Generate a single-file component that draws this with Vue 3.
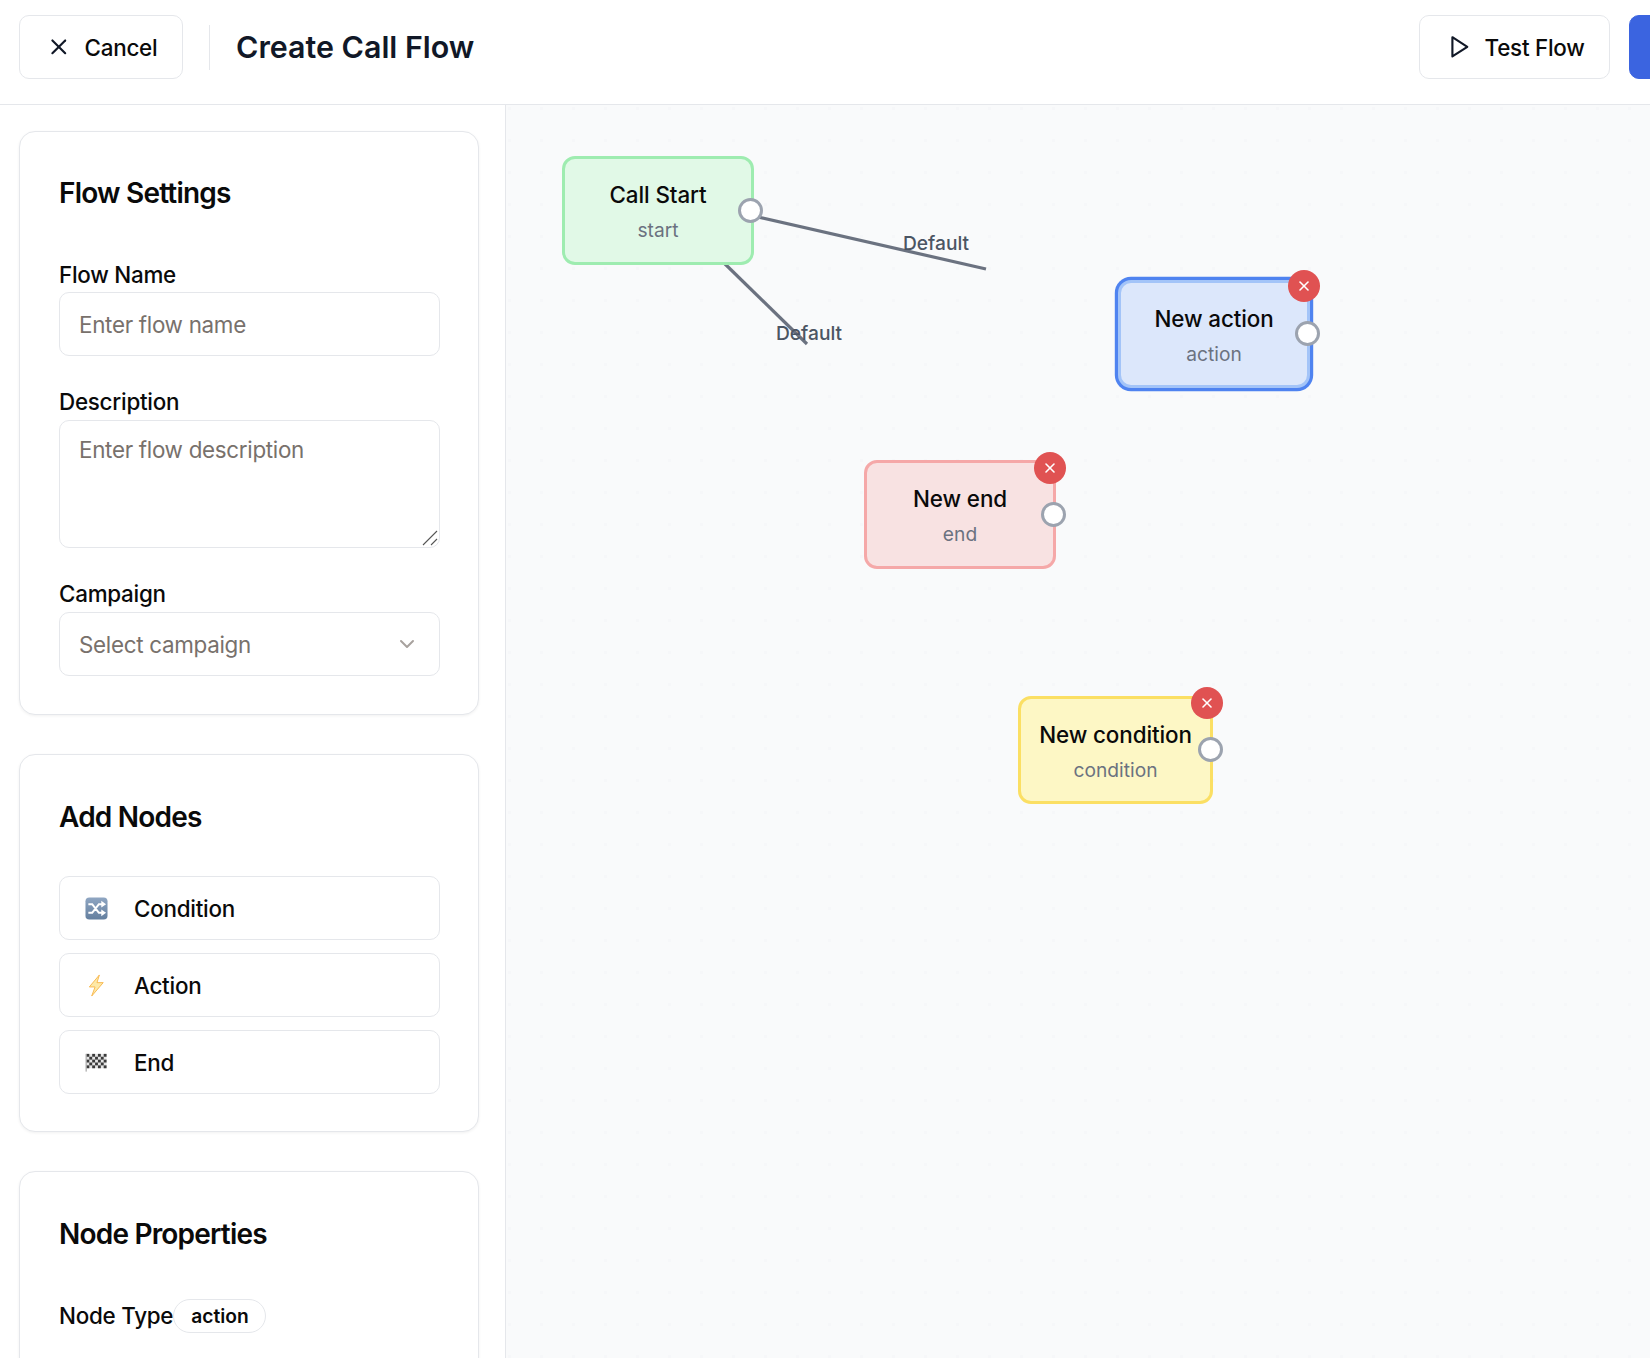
<script setup>
const nodes = [
  { id: 'start', name: 'Call Start', type: 'start', x: 562, y: 156, w: 192, h: 109, removable: false },
  { id: 'action', name: 'New action', type: 'action', x: 1118, y: 280, w: 192, h: 108, removable: true },
  { id: 'end', name: 'New end', type: 'end', x: 864, y: 460, w: 192, h: 109, removable: true },
  { id: 'condition', name: 'New condition', type: 'condition', x: 1018, y: 696, w: 195, h: 108, removable: true },
]
const edges = [
  { x1: 723, y1: 262, x2: 807, y2: 344, lx: 809, ly: 333 },
  { x1: 745, y1: 214, x2: 986, y2: 269, lx: 936, ly: 243 },
]
const canvasLeft = 506
const canvasTop = 105
const checks = []
for (let r = 0; r < 5; r++) for (let c = 0; c < 7; c++) if ((r + c) % 2 === 0) checks.push({ x: 1.5 + c * 3, y: 3 + r * 3 })
</script>

<template>
  <div class="page">
    <header class="topbar">
      <div class="left">
        <button class="btn cancel">
          <svg class="icon" viewBox="0 0 24 24" fill="none" stroke="#111827" stroke-width="2" stroke-linecap="round" stroke-linejoin="round"><path d="M18 6 6 18" /><path d="m6 6 12 12" /></svg>
          Cancel
        </button>
        <span class="divider"></span>
        <h1 class="title">Create Call Flow</h1>
      </div>
      <div class="right">
        <button class="btn test">
          <svg class="icon" viewBox="0 0 24 24" fill="none" stroke="#111827" stroke-width="2" stroke-linecap="round" stroke-linejoin="round"><polygon points="6 3 20 12 6 21 6 3" /></svg>
          Test Flow
        </button>
        <button class="btn primary" aria-label="Save Flow"></button>
      </div>
    </header>

    <div class="body">
      <aside class="sidebar">
        <section class="card settings">
          <h2>Flow Settings</h2>
          <label class="lbl first">Flow Name</label>
          <input class="field" placeholder="Enter flow name" />
          <label class="lbl">Description</label>
          <div class="area-wrap">
            <textarea class="field area" placeholder="Enter flow description"></textarea>
            <svg class="grip" viewBox="0 0 16 16" fill="none" stroke="#555" stroke-width="1.1"><path d="M1 15 15 1" /><path d="M9 15l6-6" /></svg>
          </div>
          <label class="lbl">Campaign</label>
          <div class="field select">
            <span>Select campaign</span>
            <svg class="chev" viewBox="0 0 24 24" fill="none" stroke="#a8a29e" stroke-width="2" stroke-linecap="round" stroke-linejoin="round"><path d="m6 9 6 6 6-6" /></svg>
          </div>
        </section>

        <section class="card add">
          <h2>Add Nodes</h2>
          <div class="add-list">
            <button class="add-btn">
              <svg class="emoji" viewBox="0 0 24 24">
                <defs><linearGradient id="sh" x1="0" y1="0" x2="0" y2="1"><stop offset="0" stop-color="#8fa6c2" /><stop offset="1" stop-color="#647f9f" /></linearGradient></defs>
                <rect x="0.5" y="0.5" width="23" height="23" rx="4" fill="url(#sh)" />
                <path d="M3.5 7.5h4l7 9h4M3.5 16.5h4l7-9h4" fill="none" stroke="#fff" stroke-width="2.2" />
                <path d="M17 4l5 3.5-5 3.5zM17 13l5 3.5-5 3.5z" fill="#fff" />
              </svg>
              Condition
            </button>
            <button class="add-btn">
              <svg class="emoji" viewBox="0 0 24 24">
                <path d="M15 1 4.5 13.5h6L7 23 19 9h-6.5z" fill="#fde9a8" stroke="#f8b84e" stroke-width="1" stroke-linejoin="round" />
              </svg>
              Action
            </button>
            <button class="add-btn">
              <svg class="emoji" viewBox="0 0 24 24">
                <rect x="1.5" y="3" width="21" height="15" fill="#e5e5e5" />
                <rect v-for="(s, i) in checks" :key="i" :x="s.x" :y="s.y" width="3" height="3" fill="#3a3a3a" />
                <rect x="0.6" y="3" width="1.2" height="18.5" fill="#a3a3a3" />
              </svg>
              End
            </button>
          </div>
        </section>

        <section class="card props">
          <h2>Node Properties</h2>
          <div class="type-row">
            <span class="type-lbl">Node Type</span>
            <span class="badge">action</span>
          </div>
        </section>
      </aside>

      <main class="canvas">
        <svg class="edges" width="1144" height="1253">
          <line v-for="(e, i) in edges" :key="i" :x1="e.x1 - canvasLeft" :y1="e.y1 - canvasTop" :x2="e.x2 - canvasLeft" :y2="e.y2 - canvasTop" stroke="#6b7280" stroke-width="3.2" />
        </svg>
        <span v-for="(e, i) in edges" :key="'l' + i" class="edge-label" :style="{ left: e.lx - canvasLeft + 'px', top: e.ly - canvasTop + 'px' }">Default</span>

        <div
          v-for="n in nodes"
          :key="n.id"
          class="node"
          :class="n.type"
          :style="{ left: n.x - canvasLeft + 'px', top: n.y - canvasTop + 'px', width: n.w + 'px', height: n.h + 'px' }"
        >
          <div class="node-name">{{ n.name }}</div>
          <div class="node-type">{{ n.type }}</div>
          <span class="handle"></span>
          <span v-if="n.removable" class="remove">
            <svg viewBox="0 0 24 24" fill="none" stroke="#fff" stroke-width="2.4" stroke-linecap="round"><path d="M18 6 6 18" /><path d="m6 6 12 12" /></svg>
          </span>
        </div>
      </main>
    </div>
  </div>
</template>

<style>
html, body { margin: 0; overflow: hidden; }
</style>

<style scoped>
* { box-sizing: border-box; }
.page {
  width: 1650px;
  height: 1358px;
  overflow: hidden;
  background: #fff;
  font-family: Inter, "Liberation Sans", sans-serif;
  color: #0a0a0a;
  display: flex;
  flex-direction: column;
}
.topbar {
  height: 105px;
  flex: none;
  display: flex;
  align-items: center;
  padding: 0 0 10px 19px;
  border-bottom: 1px solid #e5e7eb;
  overflow: hidden;
}
.left { flex: 1; display: flex; align-items: center; }
.right { width: 231px; flex: none; display: flex; align-items: center; gap: 19px; overflow: hidden; }
.btn {
  height: 64px;
  display: inline-flex;
  align-items: center;
  gap: 13px;
  padding: 0 26px;
  background: #fff;
  border: 1px solid #e5e7eb;
  border-radius: 10px;
  font: 450 22.4px Inter, sans-serif;
  letter-spacing: -0.25px;
  color: #0a0a0a;
  white-space: nowrap;
}
.cancel { width: 164px; flex: none; }
.test { width: 191px; flex: none; }
.primary { width: 60px; flex: none; background: #3b64e0; border-color: #3b64e0; }
.icon { width: 25.6px; height: 25.6px; flex: none; }
.divider { width: 1px; height: 45px; background: #e5e7eb; margin: 0 26px 0 26px; }
.title { margin: 0; font-size: 30.4px; line-height: 40px; font-weight: 600; color: #111827; letter-spacing: 0; }

.body { flex: 1; display: flex; min-height: 0; }
.sidebar {
  width: 506px;
  flex: none;
  border-right: 1px solid #e5e7eb;
  padding: 26px 26px 0 19px;
  overflow: hidden;
}
.card {
  background: #fff;
  border: 1px solid #e5e7eb;
  border-radius: 16px;
  box-shadow: 0 1px 3px rgba(0, 0, 0, 0.06);
  padding: 0 38px 0 39px;
}
.card h2 { margin: 0; font-size: 28px; line-height: 38px; font-weight: 600; letter-spacing: -0.8px; color: #0a0a0a; }
.settings { height: 584px; padding-top: 42px; margin-bottom: 39px; }
.lbl { display: block; font-size: 22.4px; line-height: 28px; font-weight: 450; letter-spacing: -0.25px; height: 28px; margin-top: 32px; margin-bottom: 4px; }
.lbl.first { margin-top: 49px; margin-bottom: 3px; }
.field {
  display: block;
  width: 100%;
  height: 64px;
  padding: 0 19px;
  border: 1px solid #e5e7eb;
  border-radius: 10px;
  background: #fff;
  font: 400 22.4px Inter, sans-serif;
  letter-spacing: -0.3px;
  color: #0a0a0a;
  outline: none;
}
.field::placeholder { color: #78716c; opacity: 1; }
.area-wrap { position: relative; height: 128px; }
.area { height: 128px; padding-top: 13px; line-height: 32px; resize: none; }
.grip { position: absolute; right: 2px; bottom: 2px; width: 16px; height: 16px; }
.select { display: flex; align-items: center; justify-content: space-between; color: #78716c; padding-right: 20px; }
.chev { width: 24px; height: 24px; }
.add { height: 378px; padding-top: 43px; margin-bottom: 39px; }
.add-list { display: flex; flex-direction: column; gap: 13px; margin-top: 40px; }
.add-btn {
  height: 64px;
  display: flex;
  align-items: center;
  gap: 26px;
  padding: 0 26px 0 25px;
  background: #fff;
  border: 1px solid #e5e7eb;
  border-radius: 10px;
  font: 450 22.4px Inter, sans-serif;
  letter-spacing: -0.25px;
  color: #0a0a0a;
}
.emoji { width: 23px; height: 23px; flex: none; }
.props { height: 320px; padding-top: 43px; }
.type-row { display: flex; align-items: center; margin-top: 45px; }
.type-lbl { font-size: 22.4px; font-weight: 450; letter-spacing: -0.25px; line-height: 34px; }
.badge {
  margin-left: 0;
  margin-top: 1px;
  height: 34px;
  display: inline-flex;
  align-items: center;
  padding: 0 16px 0 17px;
  border: 1px solid #e5e7eb;
  border-radius: 17px;
  font-size: 19.2px;
  font-weight: 600;
}

.canvas {
  position: relative;
  flex: 1;
  background-color: #f9fafb;
  background-image: radial-gradient(circle at 3.5px 3.5px, #f6f7f9 1.6px, transparent 1.7px);
  background-size: 32px 32px;
  overflow: hidden;
}
.edges { position: absolute; left: 0; top: 0; }
.edge-label {
  position: absolute;
  transform: translate(-50%, -50%);
  font-size: 19.2px;
  font-weight: 450;
  color: #4b5563;
  line-height: 24px;
}
.node {
  position: absolute;
  display: flex;
  flex-direction: column;
  align-items: center;
  justify-content: center;
  gap: 9px;
  padding-top: 2px;
  border: 3.2px solid;
  border-radius: 13px;
}
.node-name { font-size: 22.4px; font-weight: 450; letter-spacing: -0.1px; line-height: 28px; white-space: nowrap; }
.node-type { font-size: 19.2px; line-height: 24px; color: #6b7280; }
.start { background: #e1f9e7; border-color: #9eecb0; }
.action { background: #dce7fb; border-color: #a3c4f8; box-shadow: 0 0 0 3.2px #4f83f0; }
.end { background: #f8e2e2; border-color: #f5a8a8; }
.condition { background: #fdf7c5; border-color: #fbdf63; }
.handle {
  position: absolute;
  right: -13px;
  top: 50%;
  width: 25px;
  height: 25px;
  margin-top: -13px;
  background: #fff;
  border: 3.2px solid #9ca3af;
  border-radius: 50%;
}
.start .handle { right: -12px; }
.remove {
  position: absolute;
  right: -13px;
  top: -13px;
  width: 32px;
  height: 32px;
  background: #e05252;
  border-radius: 50%;
  display: flex;
  align-items: center;
  justify-content: center;
}
.end .remove { top: -11px; }
.condition .remove { top: -12px; }
.remove svg { width: 16px; height: 16px; }
</style>
